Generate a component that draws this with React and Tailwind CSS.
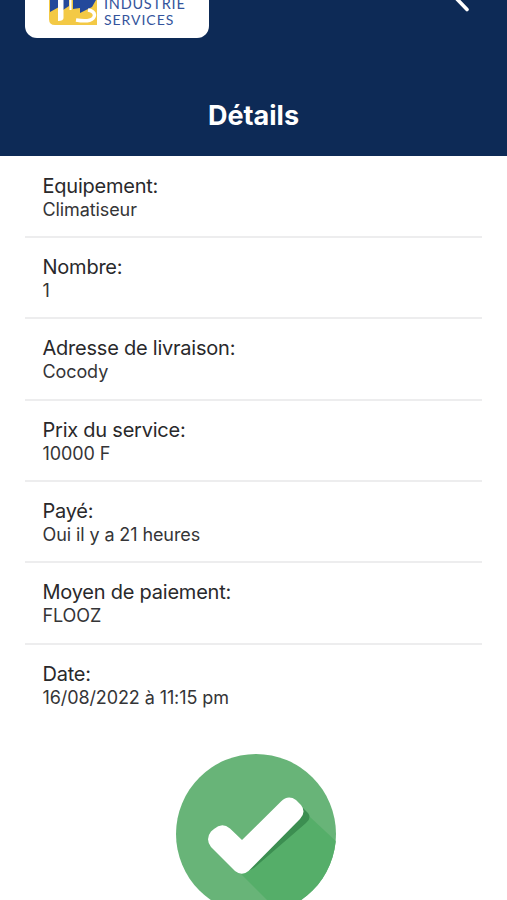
const details = [
  { label: 'Equipement:', value: 'Climatiseur' },
  { label: 'Nombre:', value: '1' },
  { label: 'Adresse de livraison:', value: 'Cocody' },
  { label: 'Prix du service:', value: '10000 F' },
  { label: 'Payé:', value: 'Oui il y a 21 heures' },
  { label: 'Moyen de paiement:', value: 'FLOOZ' },
  { label: 'Date:', value: '16/08/2022 à 11:15 pm' },
];

const Logo = () => (
  <div className="flex h-[38px] w-[184px] items-end overflow-hidden rounded-b-xl bg-white pb-[10px] pl-6">
    <svg width="48" height="28" viewBox="0 0 48 28" className="shrink-0">
      <path d="M0 0H48V25H6Q0 25 0 19Z" fill="#f3c945" />
      <path d="M1 0H10V7L1 12Z" fill="#24499b" />
      <path d="M14 0H20V6L14 10Z" fill="#24499b" />
      <path d="M24 0H47L43 7L31 13V8L24 9Z" fill="#24499b" />
      <path d="M9 0H14.5V18Q14.5 21 9 21Z" fill="#fff" />
      <path d="M20.5 0H22.5V10H20.5Z" fill="#fff" />
      <path d="M27 20Q45 23 45.5 15Q45 11 39 10" fill="none" stroke="#fff" strokeWidth="3.5" />
    </svg>
    <div className="ml-[7px] font-['Lato',sans-serif] text-[14.5px] leading-4 tracking-[0.75px] text-[#34549c]">
      <p>INDUSTRIE</p>
      <p className="text-[14px] tracking-[0.95px]">SERVICES</p>
    </div>
  </div>
);

const Header = () => (
  <header className="h-[155.5px] bg-[#0d2a56] px-[25px]">
    <div className="flex items-start justify-between">
      <Logo />
      <svg width="16" height="14" viewBox="0 0 16 14" className="mr-[11px]">
        <path d="M0 -3L12 9.5" fill="none" stroke="#fff" strokeWidth="3.6" strokeLinecap="round" />
      </svg>
    </div>
    <h1 className="mt-[60px] text-center text-[27px] leading-9 font-bold text-white">Détails</h1>
  </header>
);

const DetailRow = ({ label, value }) => (
  <li className="h-[81.4px] border-b-2 border-[#ededee] pt-[17px] pl-[17.5px] last:border-b-0">
    <p className="text-[20px] leading-6 tracking-[-0.23px] text-[#29292b]">{label}</p>
    <p className="text-[18px] leading-[23px] tracking-[-0.1px] text-[#353537]">{value}</p>
  </li>
);

const SuccessIcon = () => (
  <svg width="160" height="160" viewBox="0 0 160 160" className="mx-auto block">
    <defs>
      <clipPath id="disc">
        <circle cx="80" cy="80" r="80" />
      </clipPath>
    </defs>
    <g clipPath="url(#disc)">
      <rect width="160" height="160" fill="#68b478" />
      <path d="M65 120L134 63L190 115V220H165Z" fill="#55ae69" />
      <path d="M70 118L127 54L132 59Q136 64 130 69L78 114Z" fill="#3c8e51" />
      <path
        d="M66 86L105 47.5Q112 40.5 120 46L125 51Q130.5 58 124 65L72.5 117Q66 122.5 59 117L35 93Q29 85 35 77.5L38 75Q46 68 54 74.5Z"
        fill="#fff"
      />
    </g>
  </svg>
);

export default function App() {
  return (
    <div className="h-[900px] overflow-hidden bg-white font-['Inter',sans-serif]">
      <Header />
      <main className="pt-px">
        <ul className="mx-[25px] h-[597.5px]">
          {details.map((item) => (
            <DetailRow key={item.label} label={item.label} value={item.value} />
          ))}
        </ul>
        <div className="pl-1">
          <SuccessIcon />
        </div>
      </main>
    </div>
  );
}
